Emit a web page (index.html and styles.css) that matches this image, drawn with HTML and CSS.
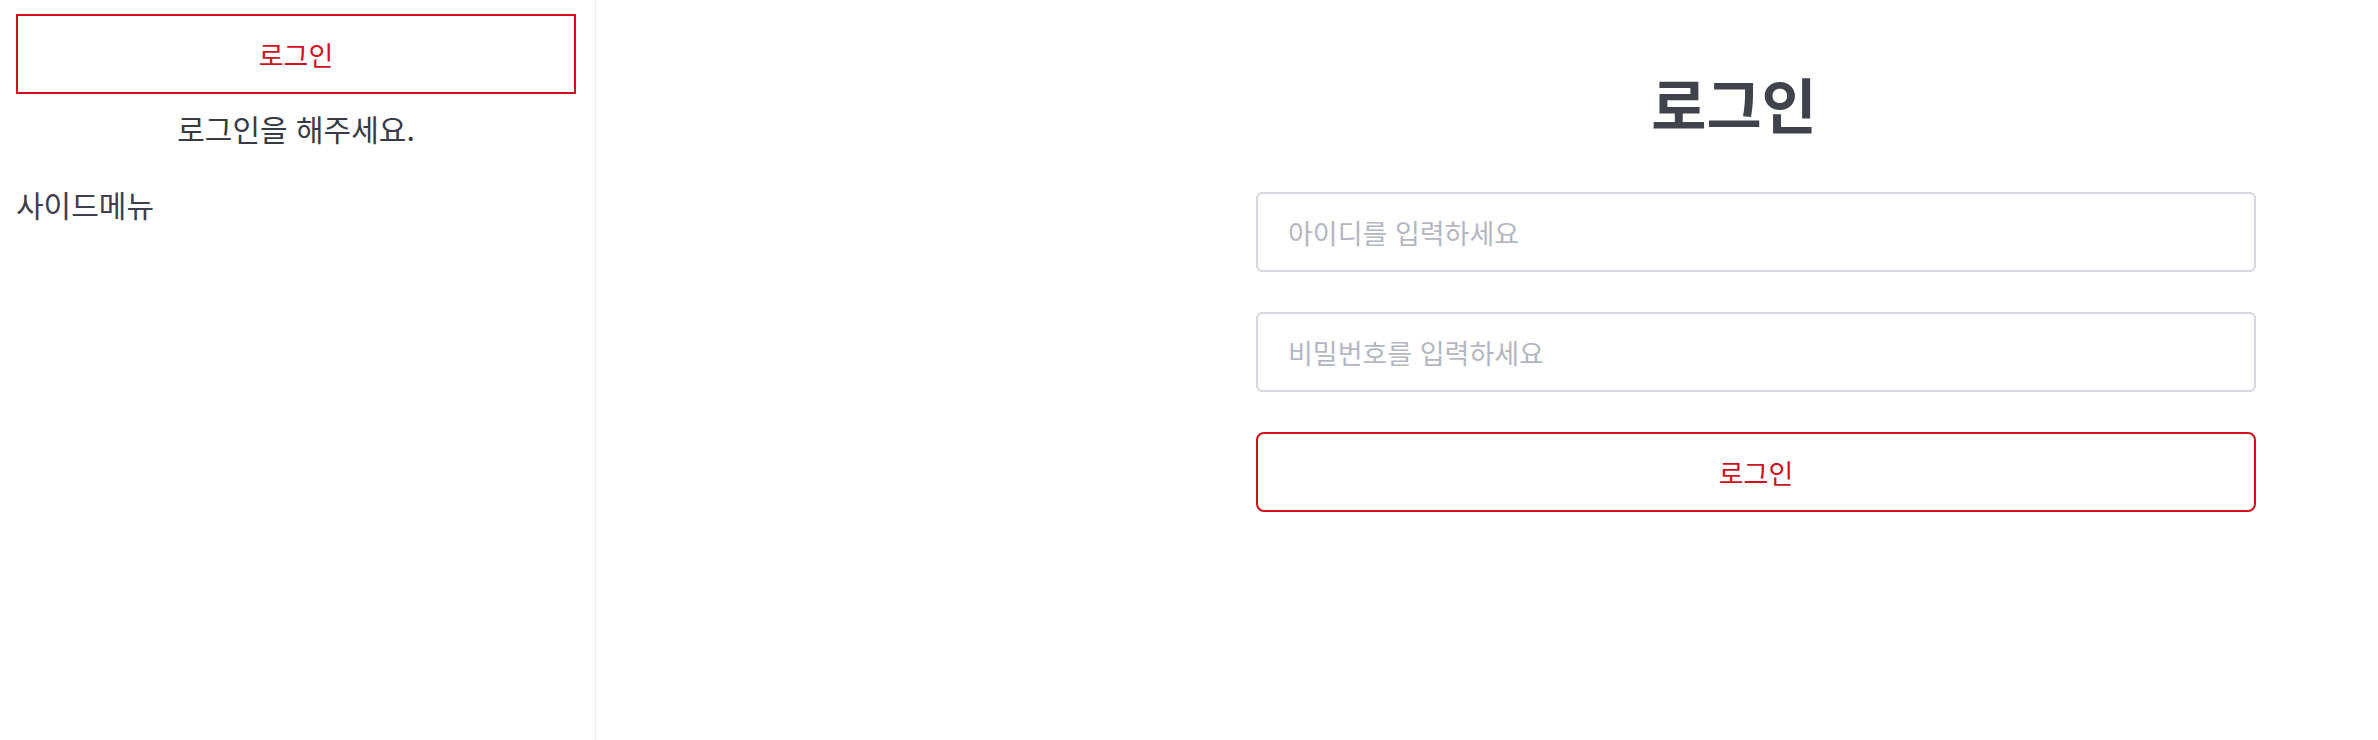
FILE: index.html
```html
<!DOCTYPE html>
<html lang="ko">
<head>
<meta charset="utf-8">
<title>로그인</title>
<link rel="stylesheet" href="styles.css">
</head>
<body>
<div class="layout">
  <aside class="sidebar">
    <button class="side-login" type="button">로그인</button>
    <p class="side-msg">로그인을 해주세요.</p>
    <h2 class="side-menu">사이드메뉴</h2>
  </aside>
  <main class="main">
    <form class="login-form">
      <h1 class="login-title">로그인</h1>
      <input class="field" type="text" placeholder="아이디를 입력하세요">
      <input class="field" type="password" placeholder="비밀번호를 입력하세요">
      <button class="submit" type="button">로그인</button>
    </form>
  </main>
</div>
</body>
</html>
```
FILE: styles.css
```css
* { box-sizing: border-box; }
html, body { margin: 0; padding: 0; background: #fff; }
body {
  font-family: "Noto Sans CJK KR", "Noto Sans", sans-serif;
  color: #3d4049;
}
.layout {
  display: flex;
  min-height: 740px;
}
.sidebar {
  width: 596px;
  flex: none;
  border-right: 1px solid #ededed;
  padding: 14px 19px 0 16px;
  display: flex;
  flex-direction: column;
}
.side-login {
  height: 80px;
  width: 100%;
  border: 2px solid #d0111b;
  background: #fff;
  color: #d0111b;
  font-family: inherit;
  font-size: 27px;
  font-weight: 400;
  border-radius: 0;
}
.side-msg {
  margin: 14px 0 0;
  text-align: center;
  font-size: 30px;
  font-weight: 400;
  line-height: 40px;
  color: #383b44;
}
.side-menu {
  margin: 36px 0 0 0;
  font-size: 30px;
  font-weight: 400;
  line-height: 40px;
}
.main {
  flex: 1;
  padding-left: 660px;
}
.login-form {
  width: 1000px;
  display: flex;
  flex-direction: column;
  gap: 40px;
}
.login-title {
  margin: 70px 0 16px;
  padding-right: 44px;
  text-align: center;
  font-size: 60px;
  font-weight: 700;
  line-height: 66px;
  color: #40434b;
}
.field {
  height: 80px;
  border: 2px solid #d4d6e0;
  border-radius: 6px;
  padding: 0 30px;
  font-family: inherit;
  font-size: 27px;
  font-weight: 400;
  color: #3d4049;
  outline: none;
}
.field::placeholder { color: #b4b6c2; }
.submit {
  height: 80px;
  border: 2px solid #d0111b;
  border-radius: 8px;
  background: #fff;
  color: #d0111b;
  font-family: inherit;
  font-size: 27px;
  font-weight: 400;
}
```
